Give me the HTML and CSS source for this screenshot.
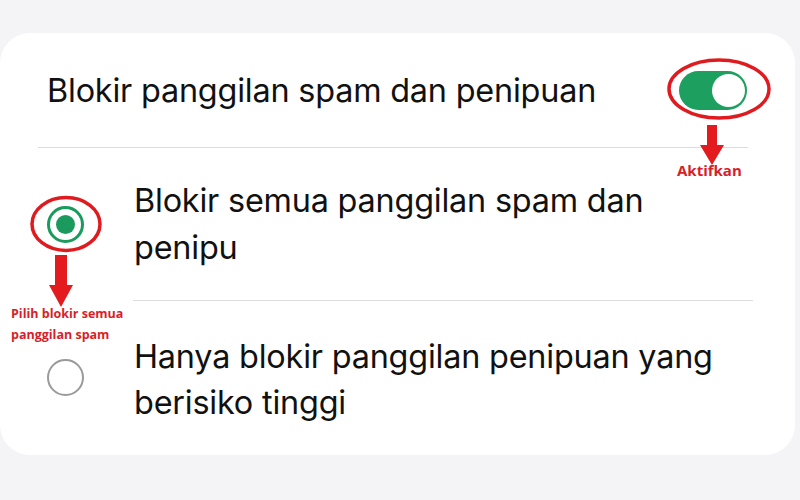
FILE: index.html
```html
<!DOCTYPE html>
<html lang="id">
  <head>
    <meta charset="UTF-8" />
    <meta name="viewport" content="width=device-width, initial-scale=1.0" />
    <title>Blokir panggilan spam</title>
    <link rel="stylesheet" href="styles.css">
  </head>
  <body>
    <section class="kartu">
      <div class="baris atas">
        <span class="judul">Blokir panggilan spam dan penipuan</span>
        <div class="saklar aktif"><span class="bulat"></span></div>
      </div>
      <hr class="garis garis-penuh">
      <div class="baris pilihan">
        <div class="radio-kolom"><span class="radio dipilih"></span></div>
        <p class="teks">Blokir semua panggilan spam dan<br>penipu</p>
      </div>
      <hr class="garis garis-dalam">
      <div class="baris pilihan bawah">
        <div class="radio-kolom"><span class="radio"></span></div>
        <p class="teks">Hanya blokir panggilan penipuan yang<br>berisiko tinggi</p>
      </div>

      <!-- tanda merah -->
      <svg class="tanda tanda-saklar" width="110" height="70" viewBox="0 0 110 70">
        <ellipse cx="52" cy="31" rx="50" ry="29" fill="none" stroke="#e01b1f" stroke-width="3.5"/>
      </svg>
      <svg class="panah panah-saklar" width="24" height="40" viewBox="0 0 24 40">
        <path d="M7 0h10v20h7L12 40 0 20h7z" fill="#e31b1f"/>
      </svg>
      <span class="label label-saklar">Aktifkan</span>

      <svg class="tanda tanda-radio" width="74" height="60" viewBox="0 0 74 60">
        <ellipse cx="36" cy="29" rx="34" ry="26.5" fill="none" stroke="#e01b1f" stroke-width="3.5"/>
      </svg>
      <svg class="panah panah-radio" width="24" height="52" viewBox="0 0 24 52">
        <path d="M6 0h12v30h6L12 52 0 30h6z" fill="#e31b1f"/>
      </svg>
      <span class="label label-radio">Pilih blokir semua<br>panggilan spam</span>
    </section>
  </body>
</html>
```

FILE: styles.css
```css
* {
  box-sizing: border-box;
  margin: 0;
}

body {
  background-color: #f4f4f6;
  font-family: "Inter", "Open Sans", sans-serif;
  color: #111;
}

/*---kartu---*/
.kartu {
  position: relative;
  margin-top: 33px;
  width: 795px;
  height: 422px;
  background-color: #fff;
  border-radius: 30px;
}

.baris {
  display: flex;
  align-items: center;
}

.atas {
  height: 114px;
  padding-left: 47px;
  padding-right: 48px;
  justify-content: space-between;
}

.judul {
  font-size: 32.4px;
  letter-spacing: -0.2px;
}

/*---saklar---*/
.saklar {
  width: 68px;
  height: 39px;
  border-radius: 20px;
  background-color: #1da05f;
  position: relative;
}
.saklar .bulat {
  position: absolute;
  right: 2px;
  top: 3px;
  width: 33px;
  height: 33px;
  border-radius: 50%;
  background-color: #fff;
}

/*---garis---*/
.garis {
  border: none;
  height: 1px;
  background-color: #dcdcde;
}
.garis-penuh {
  margin-left: 38px;
  margin-right: 47px;
}
.garis-dalam {
  margin-left: 133px;
  margin-right: 42px;
}

/*---pilihan---*/
.pilihan {
  height: 152px;
}
.bawah {
  height: 154px;
  padding-top: 4px;
}
.radio-kolom {
  width: 134px;
  padding-left: 47px;
}
.radio {
  display: block;
  width: 37px;
  height: 37px;
  border-radius: 50%;
  border: 2.5px solid #9a9a9a;
}
.bawah .radio {
  margin-top: -6px;
}
.radio.dipilih {
  border: 3px solid #1a9a5c;
  position: relative;
}
.radio.dipilih::after {
  content: "";
  position: absolute;
  left: 6px;
  top: 6px;
  width: 19px;
  height: 19px;
  border-radius: 50%;
  background-color: #1a9a5c;
}
.teks {
  font-size: 32.4px;
  line-height: 47px;
  letter-spacing: -0.2px;
}
.bawah .teks {
  line-height: 46px;
}

/*---tanda merah---*/
.tanda, .panah {
  position: absolute;
}
.tanda-saklar {
  left: 667px;
  top: 25px;
}
.panah-saklar {
  left: 700px;
  top: 92px;
}
.label {
  position: absolute;
  color: #d81e28;
  font-family: "Open Sans", sans-serif;
  font-weight: 700;
}
.label-saklar {
  left: 677px;
  top: 127px;
  font-size: 15px;
}
.tanda-radio {
  left: 30px;
  top: 162px;
}
.panah-radio {
  left: 49px;
  top: 222px;
}
.label-radio {
  left: 11px;
  top: 270px;
  font-size: 12.5px;
  line-height: 21px;
}
```
